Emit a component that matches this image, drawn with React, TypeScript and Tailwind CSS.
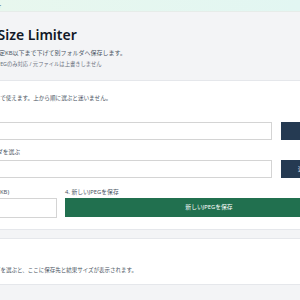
import React from "react";

const jp = "font-['Noto_Sans','Noto_Sans_CJK_JP',sans-serif]";

export default function App() {
  return (
    <div className={`w-[300px] h-[300px] overflow-hidden bg-[#f3f4f6] ${jp}`}>
      {/* window title strip */}
      <div className="h-[12px] flex items-center bg-gradient-to-r from-[#e8f7ee] to-[#e2f6f2] border-b border-[#e6ece9]">
        <span className="-ml-[46px] text-[6px] leading-[8px] text-[#374151]">JPEG Size Limiter</span>
      </div>

      <div className="-ml-[31px] w-[400px]">
        <h1 className="-ml-[6px] mt-[15px] text-[14px] leading-[16px] font-semibold text-[#111827]">JPEG Size Limiter</h1>
        <p className="ml-[5px] mt-[6px] text-[6px] leading-[8px] text-[#4b5563]">JPEGを指定KB以下まで下げて別フォルダへ保存します。</p>
        <p className="mt-[3px] text-[5.3px] leading-[8px] text-[#6b7280]">入力形式：JPEGのみ対応 / 元ファイルは上書きしません</p>
      </div>

      <div className="-ml-[70px] w-[420px] mt-[12px]">
        <section className="bg-white border border-[#e5e7eb] rounded-[3px] pl-[19px] pt-[13px] pb-[11px]">
          <p className="text-[5.6px] leading-[8px] text-[#4b5563]">インターネットなしで使えます。上から順に選ぶと迷いません。</p>

          <div className="mt-[7px] text-[5.8px] leading-[8px] text-[#4b5563]">1. JPEGを選ぶ</div>
          <div className="mt-[5px] flex gap-[9px]">
            <div className="w-[322px] h-[18px] border border-[#d4d4d4] bg-white" />
            <button className="w-[60px] h-[18px] bg-[#253a52] text-white text-[5.8px]">選ぶ</button>
          </div>

          <div className="mt-[8px] text-[5.8px] leading-[8px] text-[#4b5563]">2. 保存先のフォルダを選ぶ</div>
          <div className="mt-[4px] flex gap-[9px]">
            <div className="w-[322px] h-[18px] border border-[#d4d4d4] bg-white" />
            <button className="w-[60px] h-[18px] bg-[#253a52] text-white text-[5.8px] text-left pl-[17px]">選ぶ</button>
          </div>

          <div className="mt-[10px] flex gap-[8px]">
            <div className="w-[107px]">
              <div className="text-[5.8px] leading-[8px] text-[#4b5563]">3. 目標サイズ上限 (KB)</div>
              <div className="mt-[2px] h-[20px] border border-[#d4d4d4] bg-white" />
            </div>
            <div className="w-[280px]">
              <div className="text-[5.8px] leading-[8px] text-[#4b5563]">4. 新しいJPEGを保存</div>
              <button className="block mt-[2px] w-full h-[19px] bg-[#21704f] text-white text-[5.8px] pl-[8px]">新しいJPEGを保存</button>
            </div>
          </div>
        </section>

        <section className="mt-[8px] bg-white border border-[#e5e7eb] rounded-[3px] pl-[19px] pt-[27px] pb-[10px]">
          <p className="text-[5.5px] leading-[8px] text-[#4b5563]">JPEGと保存フォルダを選ぶと、ここに保存先と結果サイズが表示されます。</p>
        </section>
      </div>
    </div>
  );
}
